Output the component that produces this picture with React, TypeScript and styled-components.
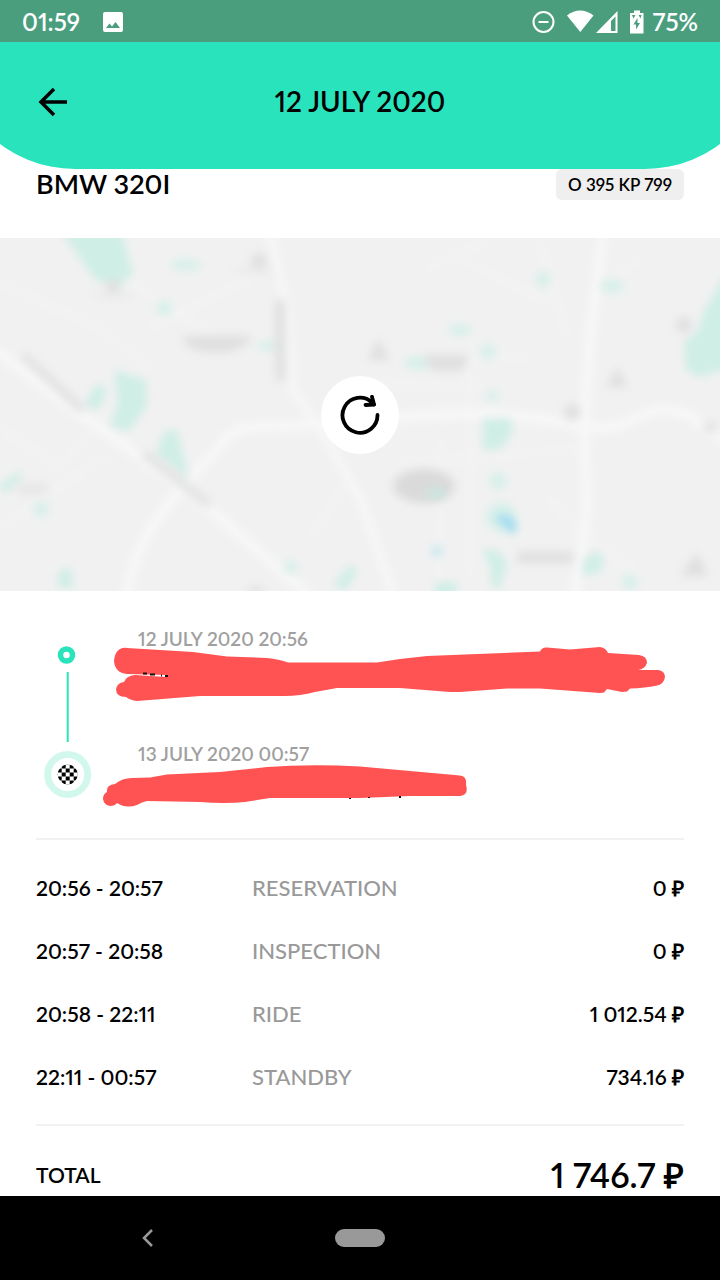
import React from "react";
import styled, { createGlobalStyle } from "styled-components";

const mint = "#29e3bc";

const GlobalStyle = createGlobalStyle`
  * { box-sizing: border-box; }
  body {
    margin: 0;
    background: #fff;
    color: #000;
    font-family: Lato, "Liberation Sans", sans-serif;
    font-weight: 600;
    font-variant-numeric: proportional-nums;
  }
  button { font: inherit; color: inherit; border: 0; padding: 0; background: none; cursor: pointer; }
  svg { display: block; }
`;

const Screen = styled.div`
  min-height: 100vh;
  display: flex;
  flex-direction: column;
`;

const StatusBar = styled.div`
  height: 42px;
  padding: 2px 22px 0;
  display: flex;
  align-items: center;
  justify-content: space-between;
  background: #4a9e7e;
  color: #fff;
  font-size: 24px;
  line-height: 28px;
`;

const StatusGroup = styled.div<{ $gap: number }>`
  display: flex;
  align-items: center;
  gap: ${(p) => p.$gap}px;
`;

const Header = styled.header`
  position: relative;
  overflow: hidden;
  height: 127px;
  padding: 0 36px 8px;
  display: grid;
  grid-template-columns: 36px 1fr 36px;
  align-items: center;

  &::before {
    content: "";
    position: absolute;
    inset: 0 -50px;
    z-index: -1;
    border-radius: 0 0 125px 125px;
    background: ${mint};
  }
`;

const Title = styled.h1`
  margin: 0;
  padding-bottom: 2px;
  text-align: center;
  font-size: 28px;
  line-height: 30px;
  font-weight: 600;
`;

const Content = styled.main`
  flex: 1;
`;

const CarRow = styled.div`
  height: 69px;
  padding: 0 36px;
  display: flex;
  align-items: flex-start;
  justify-content: space-between;
`;

const CarName = styled.h2`
  margin: 0;
  font-size: 27px;
  line-height: 30px;
  font-weight: 600;
`;

const Plate = styled.span`
  padding: 0 12px;
  border-radius: 6px;
  background: #efefef;
  font-size: 17px;
  line-height: 31px;
`;

const MapPanel = styled.section`
  position: relative;
  height: 353px;
  overflow: hidden;
  background: #f1f1f1;

  > svg { width: 100%; height: 100%; }
`;

const ReloadButton = styled.button`
  position: absolute;
  top: 50%;
  left: 50%;
  width: 78px;
  height: 78px;
  transform: translate(-50%, -50%);
  border-radius: 50%;
  background: #fff;
  display: grid;
  place-items: center;
`;

const Route = styled.section`
  position: relative;
  margin: 0 36px;
  padding: 36px 0 0;
  height: 247px;
  display: grid;
  grid-template-columns: 102px 1fr;
`;

const Stops = styled.ol`
  margin: 0;
  padding: 0;
  list-style: none;
`;

const Stop = styled.li`
  height: 115px;
  color: #a0a0a0;
  font-size: 19px;
  line-height: 24px;
`;

const Scribble = styled.svg`
  position: absolute;
  top: 0;
  left: 0;
  pointer-events: none;
`;

const Charges = styled.section`
  margin: 0 36px;
  padding: 16px 0;
  border-top: 2px solid #f1f1f1;
  border-bottom: 2px solid #f1f1f1;
`;

const ChargeTable = styled.table`
  width: 100%;
  table-layout: fixed;
  border-collapse: collapse;
  line-height: 31px;
`;

const Cell = styled.td<{ $muted?: boolean; $end?: boolean }>`
  height: 63px;
  padding: 0;
  font-size: ${(p) => (p.$muted ? 22 : 21)}px;
  font-weight: ${(p) => (p.$muted ? 500 : 600)};
  color: ${(p) => (p.$muted ? "#999" : "inherit")};
  text-align: ${(p) => (p.$end ? "right" : "left")};
`;

const TotalRow = styled.div`
  height: 69px;
  margin: 0 36px;
  padding-top: 29px;
  display: flex;
  justify-content: space-between;
  font-size: 21px;
  line-height: 40px;
`;

const TotalAmount = styled.strong`
  font-size: 34px;
  font-weight: 600;
`;

const NavBar = styled.nav`
  height: 84px;
  background: #000;
  display: grid;
  grid-template-columns: 294px 1fr 294px;
  place-items: center;
`;

const HomePill = styled.button`
  width: 50px;
  height: 18px;
  border-radius: 9px;
  background: #999;
`;

const charges = [
  { time: "20:56 - 20:57", label: "RESERVATION", cost: "0 ₽" },
  { time: "20:57 - 20:58", label: "INSPECTION", cost: "0 ₽" },
  { time: "20:58 - 22:11", label: "RIDE", cost: "1 012.54 ₽" },
  { time: "22:11 - 00:57", label: "STANDBY", cost: "734.16 ₽" },
];

const checks = Array.from({ length: 49 }, (_, i) => i).filter((i) => i % 2 === 1);

function StatusIcons() {
  return (
    <svg width="112" height="24" viewBox="532 9 112 24" fill="#fff" aria-hidden="true">
      <circle cx="543.5" cy="21" r="10" fill="none" stroke="#fff" strokeWidth="2" />
      <path d="M538.5 20h10v2h-10z" />
      <path d="M567 14.5Q580 4.500 593.500 14.500L580.300 31Z" />
      <path fillRule="evenodd" d="M596 32L617.500 10V32ZM611 20V30H615.500V15.500Z" />
      <path fillRule="evenodd" d="M634 9.500H640V12H643.500V32.500H630V12H634ZM637.500 17L633.500 23.500H636V28.500L640 22H637.500ZM632 14L635.500 14L633.500 17.500ZM638.500 14H641.500L640.500 17.500Z" />
    </svg>
  );
}

function MapArt() {
  return (
    <svg viewBox="0 0 720 353" preserveAspectRatio="xMidYMid slice" aria-hidden="true">
      <defs>
        <filter id="soft" x="-10%" y="-10%" width="120%" height="120%"><feGaussianBlur stdDeviation="4" /></filter>
        <filter id="haze" x="-10%" y="-10%" width="120%" height="120%"><feGaussianBlur stdDeviation="5" /></filter>
      </defs>
      <g filter="url(#soft)" fill="none" stroke="#f4f4f4" strokeWidth="4">
        <path d="M0 190L60 230L90 195M0 290L110 215M150 90L260 35M0 45L100 90L150 130M75 10L210 95M460 20L548 65M470 115V340M440 120H530M400 225L590 210M540 5L568 100M425 30L495 0M440 200V350M545 260L640 340M310 300L350 240M640 20L590 60M370 145L480 150" />
      </g>
      <g filter="url(#soft)" fill="none" stroke="#f8f8f8" strokeWidth="9" strokeLinejoin="round">
        <path d="M-5 112L80 176L190 254L310 358" />
        <path d="M126 358C140 285 175 260 225 202C240 182 270 192 315 186C380 180 430 176 490 176C560 180 575 190 605 190C635 188 640 170 670 172C695 175 700 190 725 202" />
        <path d="M270 -5L287 70L292 150L330 207L362 265L394 358" strokeWidth="7" />
        <path d="M603 -5L590 100L584 185L587 270L575 358" />
      </g>
      <g filter="url(#soft)" fill="#cfeee6">
        <path d="M62 -5H122L133 36L116 50L94 40Z" />
        <path d="M114 132L146 142L147 168L129 193L110 188L118 164Z" />
        <path d="M84 168L96 146L108 152L98 172Z" />
        <path d="M164 194L177 191L189 243L156 216Z" />
        <path d="M730 28L703 75L698 92L684 104L686 132L700 139L730 130Z" />
        <path d="M483 181H512V195L502 210L483 213Z" />
        <path d="M0 247L20 233L22 241L3 257Z" />
        <path d="M333 347L350 327L358 332L345 353Z" />
        <path d="M481 312H497L507 325L500 350H492L490 326Z" />
        <path d="M584 322L596 313L605 322L599 335L582 337Z" />
        <path d="M435 344H457V358H435Z" />
        <path d="M57 336L70 328L74 350H59Z" />
      </g>
      <g filter="url(#soft)" fill="#d8f0ea">
        <ellipse cx="186" cy="27" rx="16" ry="6" />
        <circle cx="164" cy="70" r="8" />
        <ellipse cx="268" cy="108" rx="12" ry="5" />
        <circle cx="41" cy="271" r="8" />
        <circle cx="543" cy="41" r="8" />
        <ellipse cx="612" cy="48" rx="12" ry="7" />
        <ellipse cx="460" cy="92" rx="12" ry="6" />
        <circle cx="488" cy="114" r="8" />
        <ellipse cx="418" cy="125" rx="15" ry="7" />
        <circle cx="492" cy="157" r="6" />
        <circle cx="498" cy="243" r="9" />
        <ellipse cx="501" cy="279" rx="15" ry="15" />
        <circle cx="291" cy="329" r="7" />
        <circle cx="630" cy="344" r="8" />
      </g>
      <g filter="url(#haze)" fill="#dfdfdf">
        <circle cx="113" cy="48" r="7" /><ellipse cx="113" cy="57" rx="22" ry="3" fill="#e9e9e9" />
        <circle cx="259" cy="23" r="8" /><ellipse cx="254" cy="33" rx="22" ry="3" fill="#e9e9e9" />
        <path d="M184 98H250V105L230 114H200L184 106Z" />
        <path d="M275 62H285V143H276Z" />
        <path d="M20 118L26 115L86 170L80 175Z" />
        <path d="M140 217L148 213L212 264L207 270Z" />
        <ellipse cx="32" cy="251" rx="18" ry="6" fill="#e6e6e6" />
        <path d="M378 100L390 122H368Z" />
        <path d="M423 117H470L462 133H433Z" />
        <path d="M617 129L628 149H606Z" />
        <circle cx="572" cy="174" r="8" />
        <circle cx="684" cy="87" r="8" />
        <circle cx="710" cy="189" r="6" />
        <ellipse cx="424" cy="248" rx="31" ry="17" fill="#dadada" />
        <path d="M517 314H573V325H517Z" />
        <path d="M697 314L708 338H680Z" />
        <ellipse cx="256" cy="353" rx="9" ry="4" />
      </g>
      <g filter="url(#soft)">
        <ellipse cx="436" cy="255" rx="10" ry="6" fill="#cbe5de" />
        <path d="M493 278L508 276L518 287L513 297Z" fill="#a4dcf0" />
        <circle cx="437" cy="313" r="6" fill="#c9e9ef" />
      </g>
    </svg>
  );
}

function Timeline() {
  return (
    <svg width="60" height="176" viewBox="36 627 60 176" aria-hidden="true">
      <circle cx="66.500" cy="655" r="6" fill="none" stroke={mint} strokeWidth="5.500" />
      <path d="M67.700 672V742" stroke={mint} strokeWidth="2" />
      <circle cx="67.700" cy="774.500" r="20" fill="#fff" stroke="#d2f8ee" strokeWidth="7" />
      <clipPath id="flag"><circle cx="67.700" cy="774.500" r="10" /></clipPath>
      <g clipPath="url(#flag)">
        {checks.map((i) => (
          <rect key={i} x={53.7 + (i % 7) * 4} y={760.5 + Math.floor(i / 7) * 4} width="4" height="4" />
        ))}
      </g>
    </svg>
  );
}

function AddressScribbles() {
  return (
    <Scribble width="648" height="247" viewBox="36 591 648 247" aria-hidden="true">
      <path
        fill="#ff5252"
        d="M114 661C115 652 119 647 127 648L193 652L227 656.500L267 658Q279 659 288 662.500L377 662.500L400 659L427 656L540 651.500Q542 647 547 647.500L570 649.500L600 647Q606 648 608 653L639 655Q647 656 647 663Q645 669 638 670H658Q665 671 665 677Q664 684 657 685.500Q645 688 630 688.500L627 691.500L622 692L607 689L604 692.500L600 693L540 688.500H507L460 692H450L400 688H337L315 692Q300 696 285 696H200L137 701Q130 700 126 697Q116 697 116 689Q117 683 124 682Q126 676 135 675L167 677V675L127 674Q115 673 114 661Z"
      />
      <path
        fill="#ff5252"
        d="M103 799Q103 794 107 792Q106 785 115 784Q122 778 132 778L150 777.500L167 774.500L220 772L267 767Q310 764 360 766.500L460 775.500Q467 776 466 785Q469 795 460 796H410L360 798H270L245 802Q225 804 200 802L147 801Q142 802 137 805Q126 809 117 803Q115 806 110 806Q104 805 103 799Z"
      />
      <path d="M143 673.500H147M150 674.500H155M161 675.500H162M165 676H168M350 798V799M369 797V798M400 796V798" stroke="#111" strokeWidth="2" />
    </Scribble>
  );
}

export default function App() {
  return (
    <Screen>
      <GlobalStyle />
      <StatusBar>
        <StatusGroup $gap={23}>
          <span>01:59</span>
          <svg width="20" height="20" viewBox="0 0 20 20" aria-hidden="true">
            <path fill="#fff" fillRule="evenodd" d="M2 0H18Q20 0 20 2V18Q20 20 18 20H2Q0 20 0 18V2Q0 0 2 0ZM3 16H17L12.500 10L9 14.500L6.500 11.500Z" />
          </svg>
        </StatusGroup>
        <StatusGroup $gap={9}>
          <StatusIcons />
          <span>75%</span>
        </StatusGroup>
      </StatusBar>

      <Header>
        <button type="button" aria-label="Back">
          <svg width="32" height="32" viewBox="0 0 32 32" fill="none" stroke="#000" strokeWidth="3.500">
            <path d="M31 16H5M18 3L5 16L18 29" />
          </svg>
        </button>
        <Title>12 JULY 2020</Title>
      </Header>

      <Content>
        <CarRow>
          <CarName>BMW 320I</CarName>
          <Plate>O 395 KP 799</Plate>
        </CarRow>

        <MapPanel aria-label="Map">
          <MapArt />
          <ReloadButton type="button" aria-label="Reload map">
            <svg width="40" height="40" viewBox="0 0 40 40" fill="none" stroke="#000" strokeWidth="3.800" strokeLinecap="round" strokeLinejoin="round">
              <path d="M37.500 20A17.500 17.500 0 1 1 32 7.500L34 9.500" />
              <path d="M32 1.800L34 9.500L25.500 10" />
            </svg>
          </ReloadButton>
        </MapPanel>

        <Route>
          <Timeline />
          <Stops>
            <Stop>12 JULY 2020 20:56</Stop>
            <Stop>13 JULY 2020 00:57</Stop>
          </Stops>
          <AddressScribbles />
        </Route>

        <Charges>
          <ChargeTable>
            <tbody>
              {charges.map((c) => (
                <tr key={c.label}>
                  <Cell>{c.time}</Cell>
                  <Cell $muted>{c.label}</Cell>
                  <Cell $end>{c.cost}</Cell>
                </tr>
              ))}
            </tbody>
          </ChargeTable>
        </Charges>

        <TotalRow>
          <span>TOTAL</span>
          <TotalAmount>1 746.7 ₽</TotalAmount>
        </TotalRow>
      </Content>

      <NavBar>
        <button type="button" aria-label="System back">
          <svg width="12" height="18" viewBox="0 0 12 18" fill="none" stroke="#999" strokeWidth="2.500">
            <path d="M11 1L3 9L11 17" />
          </svg>
        </button>
        <HomePill type="button" aria-label="Home" />
      </NavBar>
    </Screen>
  );
}
